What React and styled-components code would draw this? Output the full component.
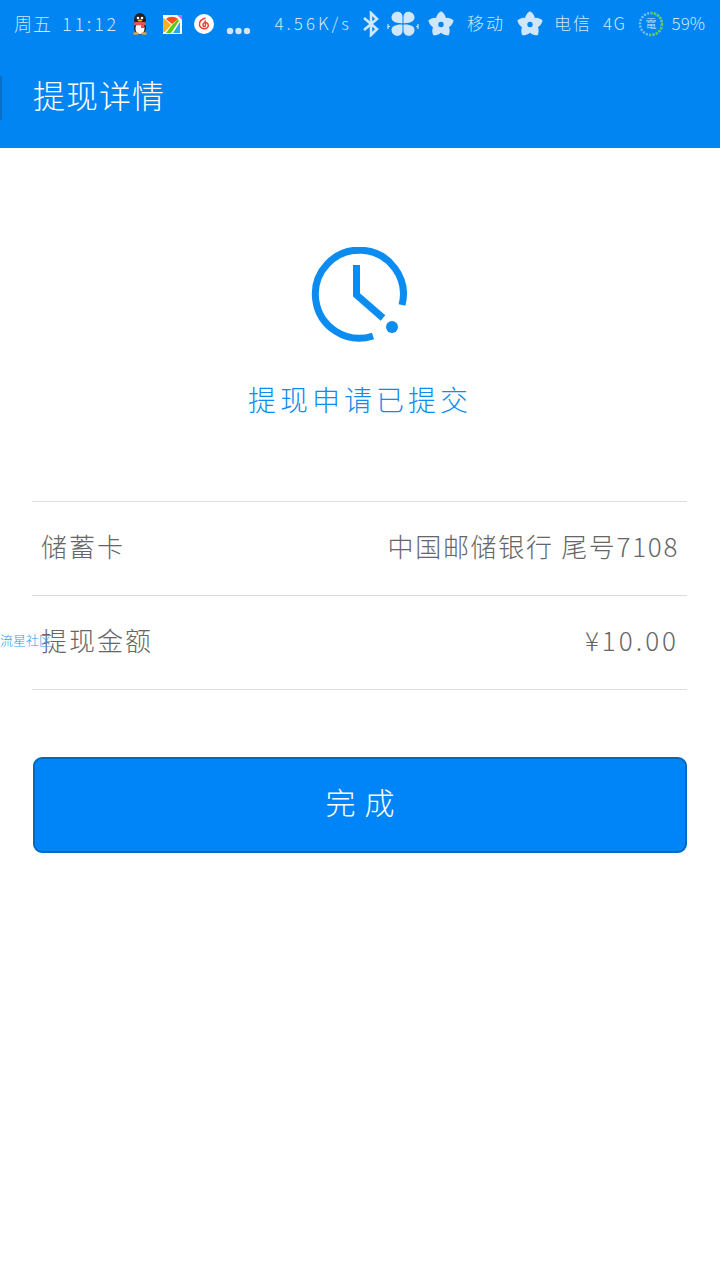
import React from "react";
import styled, { createGlobalStyle } from "styled-components";

const Global = createGlobalStyle`
  html, body { margin: 0; padding: 0; background: #fff; }
  body { font-family: "Noto Sans CJK SC", "Noto Sans", sans-serif; font-weight: 300; }
  * { box-sizing: border-box; }
`;

const Page = styled.div`
  position: relative;
  width: 720px;
  height: 1280px;
  background: #fff;
  overflow: hidden;
`;
const Header = styled.header`
  background: #0085f2;
  height: 148px;
  display: flex;
  flex-direction: column;
`;
const StatusBar = styled.div`
  height: 48px;
  display: flex;
  align-items: center;
  justify-content: space-between;
  padding: 0 15px 0 14px;
  color: #cfe6fb;
  font-size: 18px;
  line-height: 24px;
  white-space: nowrap;
`;
const StatusGroup = styled.div`
  display: flex;
  align-items: center;
`;
const StatusText = styled.span`
  font-size: ${(p) => p.$size || 18}px;
  letter-spacing: ${(p) => p.$track || 0}px;
  margin-left: ${(p) => p.$left || 0}px;
  margin-right: ${(p) => p.$right || 0}px;
  margin-top: -2px;
`;
const StatusIcon = styled.svg`
  display: block;
  flex: none;
  margin-left: ${(p) => p.$left || 0}px;
  margin-top: ${(p) => p.$top || 0}px;
`;
const TitleBar = styled.div`
  flex: 1;
  position: relative;
  display: flex;
  align-items: center;
  padding: 0 0 8px 33px;
  &::before {
    content: "";
    position: absolute;
    left: 0;
    top: 28px;
    width: 2px;
    height: 44px;
    background: #0670c8;
  }
`;
const Title = styled.h1`
  margin: 0;
  color: #fff;
  font-size: 32px;
  font-weight: 300;
  letter-spacing: 1px;
  line-height: 40px;
`;
const Hero = styled.section`
  display: flex;
  flex-direction: column;
  align-items: center;
  padding-top: 99px;
`;
const ClockSvg = styled.svg`
  display: block;
  margin-left: -3px;
`;
const HeroMessage = styled.div`
  color: #0a8cf0;
  font-size: 28px;
  letter-spacing: 4px;
  line-height: 36px;
  margin-top: 38px;
`;
const Details = styled.div`
  margin: 84px 33px 0 32px;
  border-top: 1px solid #dcdcdc;
`;
const Row = styled.div`
  height: 94px;
  border-bottom: 1px solid #dcdcdc;
  display: flex;
  align-items: center;
  justify-content: space-between;
  padding: 0 8px 6px 9px;
  color: #666;
  font-size: 26px;
  letter-spacing: 2px;
`;
const Value = styled.span`
  letter-spacing: ${(p) => p.$track}px;
`;
const Submit = styled.button`
  display: block;
  width: 654px;
  height: 96px;
  margin: 67px 0 0 33px;
  background: #0085f9;
  border: 2px solid #0069c0;
  border-radius: 9px;
  color: #fff;
  font-family: inherit;
  font-size: 30px;
  font-weight: 300;
  letter-spacing: 9px;
  padding: 0 0 8px 9px;
`;
const Watermark = styled.div`
  position: absolute;
  left: 0;
  top: 632px;
  color: #2b9bf0;
  font-size: 13px;
  line-height: 16px;
  white-space: nowrap;
`;

const ClockIcon = () => (
  <ClockSvg width="96" height="96" viewBox="0 0 96 96">
    <path d="M 91 58 A 44 44 0 1 0 62 89" fill="none" stroke="#0a8cf0" strokeWidth="7" />
    <path d="M 45.5 18 V 48 L 72 71" fill="none" stroke="#0a8cf0" strokeWidth="7" />
    <circle cx="81" cy="80" r="6" fill="#0a8cf0" />
  </ClockSvg>
);

const Penguin = () => (
  <StatusIcon width="18" height="22" viewBox="0 0 18 22">
    <ellipse cx="9" cy="7" rx="6" ry="7" fill="#222" />
    <ellipse cx="9" cy="15" rx="6" ry="6.5" fill="#222" />
    <ellipse cx="9" cy="15.5" rx="4.5" ry="5.5" fill="#fff" />
    <rect x="3" y="9" width="12" height="3.2" rx="1.4" fill="#e8505b" />
    <rect x="10" y="11" width="3" height="4" fill="#e8505b" />
    <circle cx="7" cy="5" r="1.3" fill="#fff" />
    <circle cx="11" cy="5" r="1.3" fill="#fff" />
    <ellipse cx="9" cy="7.6" rx="2.4" ry="1" fill="#f5b93a" />
    <ellipse cx="5" cy="20.5" rx="3" ry="1.2" fill="#f5a623" />
    <ellipse cx="13" cy="20.5" rx="3" ry="1.2" fill="#f5a623" />
  </StatusIcon>
);

const PaletteApp = () => (
  <StatusIcon $left={14} width="19" height="19" viewBox="0 0 19 19">
    <rect width="19" height="19" fill="#fff" />
    <path d="M3 4 C6 1 12 1 15 4 L9 9 Z" fill="#fb4c1a" />
    <path d="M0 3 L2 4 L8 10 L2 17 H0 Z" fill="#f9b21b" />
    <path d="M9 10 L15 4 L16 6 L8 18 H3 Z" fill="#5ccb0c" />
    <path d="M17 7 V18 H10 Z" fill="#29a8e8" />
    <path d="M14 0 H19 V5 Z" fill="#e25cf0" />
  </StatusIcon>
);

const Netease = () => (
  <StatusIcon $left={12} width="20" height="20" viewBox="0 0 20 20">
    <circle cx="10" cy="10" r="10" fill="#fff" />
    <path d="M11.5 4 C8 5 5 7.5 5.5 11 C6 14.5 11 16 13.5 13.5 C15.5 11 13.5 8 11 8.5 C8.5 9 8.2 12.5 10.5 12.5 C12 12.5 11.6 9 11 6.5" fill="none" stroke="#ef4136" strokeWidth="1.5" />
  </StatusIcon>
);

const Dots = () => (
  <StatusIcon $left={12} $top={14} width="24" height="8" viewBox="0 0 24 8">
    <circle cx="4" cy="4" r="3.2" fill="#cfe6fb" />
    <circle cx="12.5" cy="4" r="3.2" fill="#cfe6fb" />
    <circle cx="21" cy="4" r="3.2" fill="#cfe6fb" />
  </StatusIcon>
);

const Bluetooth = () => (
  <StatusIcon $left={10} width="18" height="26" viewBox="0 0 18 26">
    <path d="M2 7 L15 18 L9 24 V2 L15 8 L2 19" fill="none" stroke="#cfe6fb" strokeWidth="2.6" />
  </StatusIcon>
);

const Clover = () => (
  <StatusIcon $left={7} width="32" height="26" viewBox="0 0 32 26">
    <g fill="#cfe6fb">
      <path d="M15.5 12.2 C8 12.5 4.5 10 4.5 6.5 C4.5 2.5 8.5 0 11.5 0.8 C14.5 1.5 15.5 3.5 15.5 6 Z" />
      <path d="M16.5 12.2 C24 12.5 27.5 10 27.5 6.5 C27.5 2.5 23.5 0 20.5 0.8 C17.5 1.5 16.5 3.5 16.5 6 Z" />
      <path d="M15.5 13.5 C8 13.2 4.5 15.5 4.5 19 C4.5 23 8.5 25.5 11.5 24.8 C14.5 24 15.5 22 15.5 19.5 Z" />
      <path d="M16.5 13.5 C24 13.2 27.5 15.5 27.5 19 C27.5 23 23.5 25.5 20.5 24.8 C17.5 24 16.5 22 16.5 19.5 Z" />
    </g>
    <path d="M0.5 15.5 H3 M29 15.5 H31.5 M1 13 V18 M31 13 V18" stroke="#cfe6fb" strokeWidth="1.2" fill="none" />
  </StatusIcon>
);

const Flower = ({ left }) => (
  <StatusIcon $left={left} width="26" height="26" viewBox="0 0 26 26">
    <g fill="#cfe6fb">
      {[0, 72, 144, 216, 288].map((a) => (
        <path
          key={a}
          d="M13 0.2 C17.5 3 19 7.5 17 10.8 C15.5 13.5 10.5 13.5 9 10.8 C7 7.5 8.5 3 13 0.2 Z"
          transform={`rotate(${a} 13 13.5)`}
        />
      ))}
    </g>
    <circle cx="13" cy="13.5" r="2.7" fill="#0085f2" />
  </StatusIcon>
);

const BatteryRing = () => (
  <StatusIcon $left={11} width="26" height="26" viewBox="0 0 26 26">
    <circle cx="13" cy="13" r="11" fill="none" stroke="#7fc0ee" strokeWidth="2.4" strokeDasharray="2 1.4" />
    <path d="M13 2 A 11 11 0 1 1 10 23.6" fill="none" stroke="#5fd12e" strokeWidth="2.4" strokeDasharray="2 1.4" />
    <text x="13" y="17" textAnchor="middle" fontSize="11" fill="#cfe6fb">電</text>
  </StatusIcon>
);

export default function App() {
  return (
    <Page>
      <Global />
      <Header>
        <StatusBar>
          <StatusGroup>
            <StatusText $track={1}>周五</StatusText>
            <StatusText $left={10} $track={2.8} $right={12}>11:12</StatusText>
            <Penguin />
            <PaletteApp />
            <Netease />
            <Dots />
          </StatusGroup>
          <StatusGroup>
            <StatusText $size={17} $track={3}>4.56K/s</StatusText>
            <Bluetooth />
            <Clover />
            <Flower left={9} />
            <StatusText $size={17} $left={13} $track={2}>移动</StatusText>
            <Flower left={12} />
            <StatusText $size={17} $left={11} $track={2}>电信</StatusText>
            <StatusText $size={17} $left={11} $track={1.5}>4G</StatusText>
            <BatteryRing />
            <StatusText $size={17} $left={8}>59%</StatusText>
          </StatusGroup>
        </StatusBar>
        <TitleBar>
          <Title>提现详情</Title>
        </TitleBar>
      </Header>
      <Hero>
        <ClockIcon />
        <HeroMessage>提现申请已提交</HeroMessage>
      </Hero>
      <Details>
        <Row>
          <span>储蓄卡</span>
          <Value $track={1.7}>中国邮储银行 尾号7108</Value>
        </Row>
        <Row>
          <span>提现金额</span>
          <Value $track={3}>¥10.00</Value>
        </Row>
      </Details>
      <Submit>完成</Submit>
      <Watermark>流星社区</Watermark>
    </Page>
  );
}
